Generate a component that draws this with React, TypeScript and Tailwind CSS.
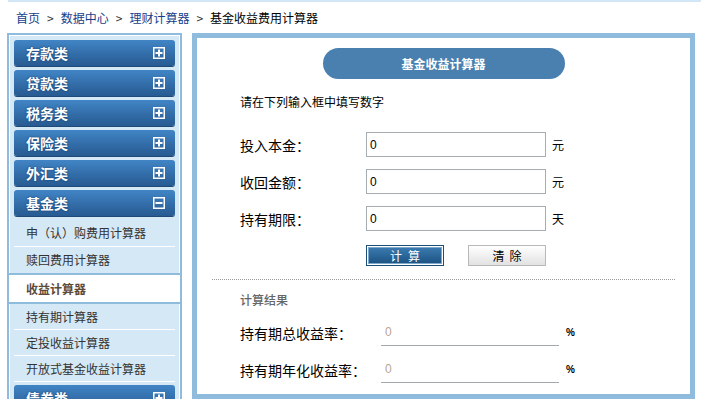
import React from "react";

const FONT = { fontFamily: '"Noto Sans CJK SC", "Noto Sans", sans-serif' };

function PlusIcon({ minus = false }: { minus?: boolean }) {
  return (
    <svg width="12" height="12" viewBox="0 0 12 12" className="shrink-0">
      <rect x="0.75" y="0.75" width="10.5" height="10.5" fill="none" stroke="#fff" strokeWidth="1.5" />
      <line x1="2.5" y1="6" x2="9.5" y2="6" stroke="#fff" strokeWidth="2" />
      {!minus && <line x1="6" y1="2.5" x2="6" y2="9.5" stroke="#fff" strokeWidth="2" />}
    </svg>
  );
}

function Header({ label, minus = false }: { label: string; minus?: boolean }) {
  return (
    <div className="h-[26px] mb-[4px] rounded-[3px] bg-linear-to-b from-[#4185c6] to-[#275a91] flex items-center justify-between pl-[12px] pr-[10px] shadow-[0_1px_0_#1f4a78]">
      <span className="text-white text-[14px] font-bold leading-none [text-shadow:0_0_2px_rgba(0,30,70,0.7)]">{label}</span>
      <PlusIcon minus={minus} />
    </div>
  );
}

function Sub({ label, h, border = true }: { label: string; h: string; border?: boolean }) {
  return (
    <div className={`${h} ${border ? "border-b border-white" : ""} flex items-center pl-[12px] text-[12px] text-[#333] leading-none`}>
      {label}
    </div>
  );
}

function Sidebar() {
  return (
    <div className="w-[175px] h-[380px] shrink-0 border-2 border-[#8fbbdc]">
      <div className="h-full border border-white bg-[#d5e8f5] px-[4px] pt-[4px]">
        <Header label="存款类" />
        <Header label="贷款类" />
        <Header label="税务类" />
        <Header label="保险类" />
        <Header label="外汇类" />
        <Header label="基金类" minus />
        <div>
          <Sub label="申（认）购费用计算器" h="h-[27px]" />
          <Sub label="赎回费用计算器" h="h-[26px]" border={false} />
          <div className="-mx-[5px] h-[31px] border-y-2 border-[#8fbbdc] bg-white flex items-center pl-[17px] text-[12px] font-bold text-[#5c4a3a] leading-none">
            收益计算器
          </div>
          <Sub label="持有期计算器" h="h-[26px]" />
          <Sub label="定投收益计算器" h="h-[26px]" />
          <Sub label="开放式基金收益计算器" h="h-[26px]" />
          <div className="h-[3px]" />
          <Header label="债券类" />
        </div>
      </div>
    </div>
  );
}

function InputRow({ label, unit }: { label: string; unit: string }) {
  return (
    <div className="flex items-center h-[25px]">
      <div className="w-[126px] text-[14px] text-black leading-none">{label}</div>
      <div className="w-[180px] h-[25px] border border-[#a5acb2] flex items-center pl-[3px] text-[12px] text-black" style={{ fontFamily: '"Liberation Sans", sans-serif' }}>
        0
      </div>
      <div className="ml-[6px] text-[12px] text-black leading-none">{unit}</div>
    </div>
  );
}

function ResultRow({ label }: { label: string }) {
  return (
    <div className="flex items-center h-[27px]">
      <div className="w-[141px] text-[14px] text-black leading-none">{label}</div>
      <div className="w-[178px] h-[27px] border-b border-[#a0a8b0] flex items-center pl-[4px] text-[12px] text-[#bca68f]" style={{ fontFamily: '"Liberation Sans", sans-serif' }}>
        0
      </div>
      <div className="ml-[7px] text-[10px] font-bold text-black leading-none" style={{ fontFamily: '"Liberation Sans", sans-serif' }}>%</div>
    </div>
  );
}

function Panel() {
  return (
    <div className="w-[503px] h-[366px] shrink-0 border-[5px] border-[#8fbbdc] bg-white flex flex-col">
      <div className="mt-[10px] mx-auto w-[242px] h-[31px] rounded-full bg-[#4a80b0] flex items-center justify-center text-white text-[12px] font-bold leading-none">
        基金收益计算器
      </div>
      <div className="mt-[15px] pl-[43px] text-[12px] leading-[16px] text-black">请在下列输入框中填写数字</div>
      <div className="mt-[22px] pl-[43px] flex flex-col gap-[12px]">
        <InputRow label="投入本金：" unit="元" />
        <InputRow label="收回金额：" unit="元" />
        <InputRow label="持有期限：" unit="天" />
      </div>
      <div className="mt-[14px] pl-[169px] flex gap-[24px]">
        <div className="w-[78px] h-[21px] border border-[#1b4f75] p-px">
          <div className="h-full border border-[#7fa9cc] bg-linear-to-b from-[#3a79ae] to-[#1d5585] flex items-center justify-center gap-[6px] text-white text-[12px] leading-none">
            <span>计</span>
            <span>算</span>
          </div>
        </div>
        <div className="w-[78px] h-[21px] border border-[#b8b8b8] bg-linear-to-b from-white to-[#e2e2e2] flex items-center justify-center gap-[5px] text-black text-[12px] leading-none">
          <span>清</span>
          <span>除</span>
        </div>
      </div>
      <div className="mt-[13px] mx-[15px] border-t border-dotted border-[#9a9a9a]" />
      <div className="mt-[12px] pl-[43px] text-[12px] leading-[16px] text-[#666] font-medium">计算结果</div>
      <div className="mt-[11px] pl-[43px] flex flex-col gap-[10px]">
        <ResultRow label="持有期总收益率：" />
        <ResultRow label="持有期年化收益率：" />
      </div>
    </div>
  );
}

export default function App() {
  return (
    <div className="w-[701px] h-[399px] overflow-hidden bg-white" style={FONT}>
      <div className="h-[2px] ml-[8px] bg-[#d3e6f5]" />
      <div className="h-[31px] flex items-center pl-[16px] text-[12px] leading-none">
        <span className="text-[#163e8a]">首页</span>
        <span className="mx-[7px] text-[#333]">&gt;</span>
        <span className="text-[#163e8a]">数据中心</span>
        <span className="mx-[7px] text-[#333]">&gt;</span>
        <span className="text-[#163e8a]">理财计算器</span>
        <span className="mx-[7px] text-[#333]">&gt;</span>
        <span className="text-black">基金收益费用计算器</span>
      </div>
      <div className="flex pl-[7px] gap-[10px] h-[366px] overflow-hidden">
        <Sidebar />
        <Panel />
      </div>
    </div>
  );
}
